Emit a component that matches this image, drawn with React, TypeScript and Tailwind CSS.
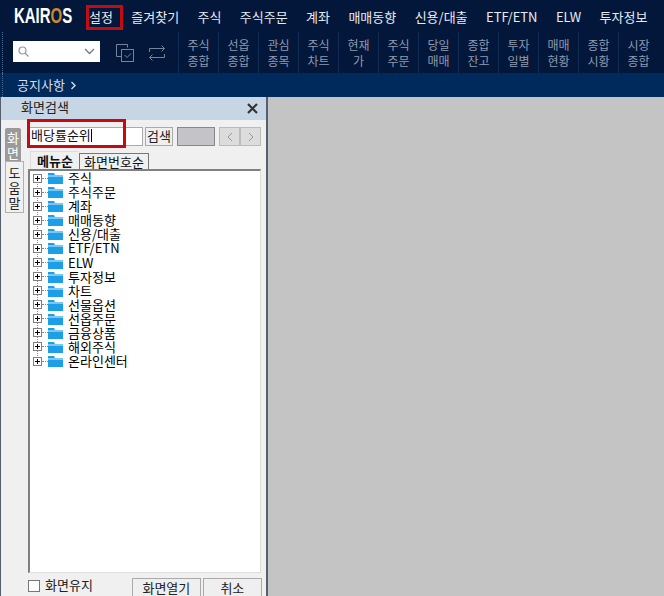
const font = { fontFamily: '"Noto Sans CJK KR", "Liberation Sans", sans-serif' };

const menus = ["설정", "즐겨찾기", "주식", "주식주문", "계좌", "매매동향", "신용/대출", "ETF/ETN", "ELW", "투자정보"];
const tools = [
  ["주식", "종합"],
  ["선옵", "종합"],
  ["관심", "종목"],
  ["주식", "차트"],
  ["현재", "가"],
  ["주식", "주문"],
  ["당일", "매매"],
  ["종합", "잔고"],
  ["투자", "일별"],
  ["매매", "현황"],
  ["종합", "시황"],
  ["시장", "종합"],
];
const tree = ["주식", "주식주문", "계좌", "매매동향", "신용/대출", "ETF/ETN", "ELW", "투자정보", "차트", "선물옵션", "선옵주문", "금융상품", "해외주식", "온라인센터"];

const Grip = () => (
  <div className="w-[3px] self-stretch ml-[2px] border-l border-dotted border-[#4a6a90]" />
);

const Folder = () => (
  <svg width="15" height="12" viewBox="0 0 15 12" className="shrink-0">
    <path d="M0 1h6l1 2h8v9H0z" fill="#1d9fe8" />
    <path d="M0 3.5h15v1H0z" fill="#d6effc" />
  </svg>
);

const TreeRow = ({ label, last }: { label: string; last: boolean }) => (
  <div className="relative flex items-center h-[14.08px]">
    {!last && <div className="absolute left-[7px] top-[7px] h-[15px] border-l border-dotted border-[#888]" />}
    <div className="relative z-10 ml-[3px] w-[9px] h-[9px] border border-[#808080] bg-white flex items-center justify-center">
      <div className="absolute w-[5px] h-px bg-black" />
      <div className="absolute h-[5px] w-px bg-black" />
    </div>
    <div className="w-[6px] border-t border-dotted border-[#888]" />
    <Folder />
    <span className="ml-[5px] text-[13px] leading-[14px] text-black">{label}</span>
  </div>
);

export default function App() {
  return (
    <div style={font} className="relative w-[664px] h-[596px] overflow-hidden bg-[#c4c4c4] flex flex-col">
      {/* top menu */}
      <div className="h-[32px] bg-[#03173b] flex items-center">
        <div className="w-[89px] pl-[14px] shrink-0">
          <div className="text-[22px] leading-none font-bold text-white whitespace-nowrap scale-x-[0.68] origin-left" style={{ fontFamily: '"Liberation Sans", sans-serif' }}>
            KAIR<span className="text-[#c98a2b]">O</span>S
          </div>
        </div>
        <div className="flex gap-[18.4px] text-[13px] text-[#e8ecf2] leading-none whitespace-nowrap">
          {menus.map((m) => (
            <span key={m}>{m}</span>
          ))}
        </div>
      </div>

      {/* toolbar */}
      <div className="h-[41px] bg-[#03173b] flex items-stretch text-[#8e9aae]">
        <Grip />
        <div className="ml-[8px] mt-[9px] w-[87px] h-[21px] bg-white flex items-center justify-between px-[5px]">
          <svg width="11" height="11" viewBox="0 0 11 11" fill="none" stroke="#9a9a9a" strokeWidth="1.2">
            <circle cx="4.5" cy="4.5" r="3.5" />
            <path d="M7 7l3.5 3.5" />
          </svg>
          <svg width="11" height="7" viewBox="0 0 11 7" fill="none" stroke="#777" strokeWidth="1.3">
            <path d="M1 1l4.5 4.5L10 1" />
          </svg>
        </div>
        <div className="ml-[15px] mt-[11px] w-[20px] h-[20px] shrink-0">
          <svg width="20" height="20" viewBox="0 0 20 20" fill="none" stroke="#75839b">
            <path d="M12.5 4.5v-3h-11v12h5" />
            <rect x="6.5" y="6.5" width="12" height="12" />
            <path d="M9.5 12l2.5 2.5 4-4" />
          </svg>
        </div>
        <div className="ml-[13px] mt-[11px] w-[18px] h-[20px] shrink-0">
          <svg width="18" height="20" viewBox="0 0 18 20" fill="none" stroke="#75839b">
            <path d="M1.5 9V5.5h15M13.5 2.5l3 3-3 3" />
            <path d="M16.5 11v3.5h-15M4.5 11.5l-3 3 3 3" />
          </svg>
        </div>
        <div className="ml-[12px] flex">
          {tools.map(([a, b], i) => (
            <div key={i} className="w-[40px] border-l border-[#0f2c55] flex flex-col items-center justify-center text-[12px] leading-[16px]">
              <span>{a}</span>
              <span>{b}</span>
            </div>
          ))}
        </div>
      </div>

      {/* notice bar */}
      <div className="h-[24px] bg-[#002a5c] flex items-center text-[#d5deea]">
        <Grip />
        <span className="ml-[12px] text-[13px] leading-none pb-[1px]">공지사항</span>
        <svg width="7" height="9" viewBox="0 0 7 9" fill="none" stroke="#d5deea" strokeWidth="1.4" className="ml-[5px]">
          <path d="M1.5 1l3.5 3.5L1.5 8" />
        </svg>
      </div>

      <div className="flex-1 min-h-0 flex">
        {/* search panel */}
        <div className="w-[268px] border-r-2 border-l border-[#55606c] bg-[#f0f0f0] flex flex-col">
          <div className="h-[23px] shrink-0 bg-[#c6d6e4] flex items-center justify-between pl-[20px] pr-[8px] text-[13px] text-[#222]">
            <span className="pb-[3px]">화면검색</span>
            <svg width="11" height="11" viewBox="0 0 11 11" stroke="#333" strokeWidth="2.2">
              <path d="M1 1l9 9M10 1l-9 9" />
            </svg>
          </div>

          <div className="flex flex-1 min-h-0">
            {/* side tabs */}
            <div className="w-[27px] shrink-0 pl-[4px] pt-[8px] flex flex-col text-[13px] leading-[15px] text-center">
              <div className="w-[16px] h-[33px] bg-[#9a9a9a] text-white flex flex-col items-center justify-center rounded-t-[2px]">
                <span>화</span>
                <span>면</span>
              </div>
              <div className="w-[19px] h-[52px] bg-[#f0f0f0] border border-[#b0b0b0] text-[#222] flex flex-col items-center justify-center">
                <span>도</span>
                <span>움</span>
                <span>말</span>
              </div>
            </div>

            <div className="flex-1 min-w-0 flex flex-col">
              {/* search row */}
              <div className="mt-[7px] h-[21px] shrink-0 flex items-start">
                <div className="w-[115px] h-[19px] bg-white border border-[#aaa] text-[13px] leading-[14px] pl-[2px] pb-[3px] text-[#111] flex items-center">
                  배당률순위<span className="w-px h-[13px] bg-black" />
                </div>
                <div className="ml-[2px] w-[28px] h-[19px] border border-[#aaa] bg-[#efefef] text-[13px] leading-[14px] pb-[2px] text-[#222] flex items-center justify-center">
                  검색
                </div>
                <div className="ml-[4px] w-[38px] h-[19px] bg-[#c4c4c8] border border-[#888]" />
                <div className="ml-[4px] w-[21px] h-[19px] border border-[#bbb] bg-[#dcdcdc] flex items-center justify-center">
                  <svg width="6" height="10" viewBox="0 0 6 10" fill="none" stroke="#999"><path d="M5 1L1 5l4 4" /></svg>
                </div>
                <div className="w-[21px] h-[19px] border border-[#bbb] bg-[#dcdcdc] flex items-center justify-center">
                  <svg width="6" height="10" viewBox="0 0 6 10" fill="none" stroke="#999"><path d="M1 1l4 4-4 4" /></svg>
                </div>
              </div>

              {/* tabs */}
              <div className="mt-[3px] ml-[2px] h-[18px] shrink-0 flex items-end text-[13px] leading-none text-[#111] whitespace-nowrap">
                <div className="h-[18px] w-[49px] border-t border-l border-[#ddd] font-bold flex items-center justify-center">
                  메뉴순
                </div>
                <div className="h-[16px] w-[70px] border-t border-l border-r border-[#777] flex items-center justify-center">
                  화면번호순
                </div>
              </div>

              {/* tree */}
              <div className="h-[404px] w-[233px] shrink-0 bg-white border-t-2 border-l-2 border-[#808080] border-r border-b border-r-[#ddd] border-b-[#ddd]">
                {tree.map((t, i) => (
                  <TreeRow key={t} label={t} last={i === tree.length - 1} />
                ))}
              </div>

              {/* footer */}
              <div className="mt-[1px] shrink-0 flex items-start text-[13px] text-[#222] leading-none">
                <div className="mt-[6px] w-[12px] h-[12px] border border-[#777] bg-white shrink-0" />
                <span className="ml-[5px] mt-[4px]">화면유지</span>
                <div className="ml-[39px] mt-[4px] w-[69px] h-[18px] bg-[#efefef] border border-b-0 border-[#aaa] flex items-center justify-center">
                  화면열기
                </div>
                <div className="ml-[2px] mt-[4px] w-[59px] h-[18px] bg-[#efefef] border border-b-0 border-[#aaa] flex items-center justify-center">
                  취소
                </div>
              </div>
            </div>
          </div>
        </div>
      </div>

      {/* red highlights over the capture */}
      <div className="absolute left-[86px] top-[5px] w-[37px] h-[25px] border-[3px] border-[#c00d14]" />
      <div className="absolute left-[27px] top-[119px] w-[99px] h-[29px] border-[3px] border-[#c00d14]" />
    </div>
  );
}
